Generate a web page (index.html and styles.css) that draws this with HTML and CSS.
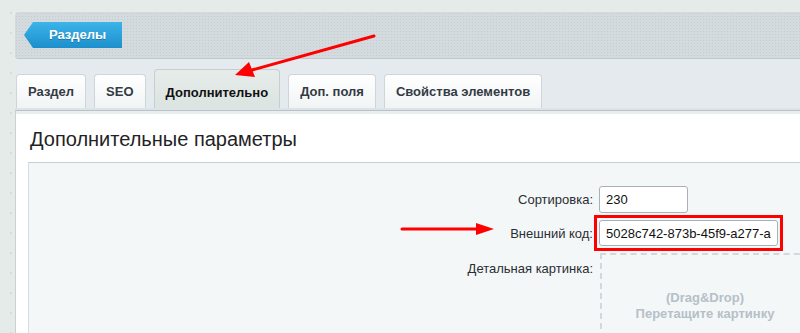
FILE: index.html
```html
<!DOCTYPE html>
<html lang="ru">
<head>
    <meta charset="UTF-8">
    <title>Раздел: Дополнительно</title>
    <link rel="stylesheet" href="styles.css">
</head>
<body>
    <div class="workarea">
        <!-- Toolbar -->
        <div class="toolbar">
            <a class="back-button" href="#">Разделы</a>
        </div>

        <!-- Tabs -->
        <div class="tabs">
            <div class="tab">Раздел</div>
            <div class="tab">SEO</div>
            <div class="tab tab-active">Дополнительно</div>
            <div class="tab">Доп. поля</div>
            <div class="tab">Свойства элементов</div>
        </div>

        <!-- Tab content -->
        <div class="content">
            <h2 class="content-title">Дополнительные параметры</h2>
            <div class="form-box">
                <div class="form-row">
                    <label class="form-label">Сортировка:</label>
                    <input class="field field-short" type="text" value="230">
                </div>
                <div class="form-row">
                    <label class="form-label">Внешний код:</label>
                    <span class="highlight">
                        <input class="field field-long" type="text" value="5028c742-873b-45f9-a277-a4c1e2f9b0d3">
                    </span>
                </div>
                <div class="form-row form-row-top">
                    <label class="form-label">Детальная картинка:</label>
                    <div class="dropzone">
                        <span>(Drag&amp;Drop)</span>
                        <span>Перетащите картинку</span>
                    </div>
                </div>
            </div>
        </div>
    </div>

    <!-- Annotation arrows -->
    <svg class="arrows" width="800" height="333" viewBox="0 0 800 333">
        <line x1="374" y1="36" x2="252" y2="70" stroke="#f00" stroke-width="3" stroke-linecap="round"/>
        <polygon points="235,75 249,62 255,77" fill="#f00"/>
        <line x1="402" y1="229" x2="478" y2="229" stroke="#f00" stroke-width="3" stroke-linecap="round"/>
        <polygon points="476,223 494,229 476,235" fill="#f00"/>
    </svg>
</body>
</html>
```

FILE: styles.css
```css
html, body {
    overflow: hidden;
}

body {
    margin: 0;
    padding: 0;
    width: 800px;
    height: 333px;
    position: relative;
    font-family: "Liberation Sans", Arial, sans-serif;
    font-size: 13px;
    color: #222;
    background-color: #e4ebe8;
    background-image: radial-gradient(circle, #d3ddd9 1px, transparent 1.5px);
    background-size: 20px 20px;
    background-position: 1px 3px;
}

.workarea {
    margin-left: 15px;
    width: 785px;
    height: 333px;
    overflow: hidden;
}

/* Toolbar */
.toolbar {
    margin-top: 12px;
    height: 47px;
    border-bottom: 1px solid #bfc8cc;
    border-radius: 4px 0 0 4px;
    background-color: #d3dbdf;
    background-image: radial-gradient(circle, #c3ccd1 0.8px, transparent 1px);
    background-size: 3px 3px;
    display: flex;
    align-items: flex-start;
    padding-top: 10px;
    padding-left: 9px;
    box-sizing: border-box;
}

.back-button {
    display: block;
    height: 26px;
    width: 98px;
    padding-left: 9px;
    box-sizing: border-box;
    line-height: 26px;
    text-align: center;
    color: #fff;
    font-weight: bold;
    font-size: 13px;
    text-decoration: none;
    text-shadow: 0 1px 0 rgba(0, 0, 0, 0.25);
    background: linear-gradient(#3bb4e8, #1d8fcc);
    clip-path: polygon(9px 0, 100% 0, 100% 100%, 9px 100%, 0 50%);
}

/* Tabs */
.tabs {
    display: flex;
    align-items: flex-end;
    gap: 8px;
    padding: 10px 0 0 1px;
    background: #e5eaee;
    border-bottom: 2px solid #dde3e7;
}

.tab {
    padding: 9px 11px 9px;
    line-height: 15px;
    font-weight: bold;
    color: #343a44;
    border: 1px solid #cfd6da;
    border-bottom: none;
    border-radius: 4px 4px 0 0;
    background: linear-gradient(#ffffff, #f1f4f5);
}

.tab-active {
    padding-top: 15px;
    padding-bottom: 8px;
    color: #111;
    background: linear-gradient(#e6ecea, #dbe4e1);
    border-color: #c6cfcf;
}

/* Content */
.content {
    background: #fff;
    border-top: 1px solid #b9c2c8;
    border-left: 1px solid #c9d1d5;
    box-shadow: inset 0 3px 0 #e9eef1;
    padding-top: 16px;
    height: 260px;
}

.content-title {
    margin: 0 0 11px 14px;
    font-size: 20px;
    font-weight: normal;
    line-height: 24px;
    color: #1f2326;
}

.form-box {
    margin-left: 12px;
    background: #f4f7f8;
    border: 1px solid #d5dde3;
    border-top-color: #c8d0d6;
    border-right: none;
    padding-top: 23px;
    height: 200px;
}

.form-row {
    display: flex;
    align-items: center;
    margin-bottom: 7px;
}

.form-row-top {
    align-items: flex-start;
    margin-top: 1px;
}

.form-row-top .form-label {
    padding-top: 8px;
}

.form-label {
    width: 564px;
    flex-shrink: 0;
    padding-right: 6px;
    text-align: right;
    color: #2a2e32;
    line-height: 15px;
}

.field {
    height: 27px;
    box-sizing: border-box;
    border: 1px solid #a9b1b8;
    border-radius: 3px;
    padding: 0 6px;
    font-family: "Liberation Sans", Arial, sans-serif;
    font-size: 13px;
    color: #111;
    background: #fff;
}

.field-short {
    width: 89px;
}

.field-long {
    width: 179px;
    height: 26px;
}

.highlight {
    display: inline-block;
    margin: -5px;
    padding: 2px;
    border: 3px solid #f00;
    line-height: 0;
}

.dropzone {
    flex-shrink: 0;
    margin-left: 1px;
    width: 206px;
    height: 102px;
    border: 2px dashed #d2d8dc;
    display: flex;
    flex-direction: column;
    align-items: center;
    justify-content: center;
    font-weight: bold;
    line-height: 16px;
    color: #b6c0c7;
}

/* Annotation arrows */
.arrows {
    position: absolute;
    left: 0;
    top: 0;
    pointer-events: none;
}
```
